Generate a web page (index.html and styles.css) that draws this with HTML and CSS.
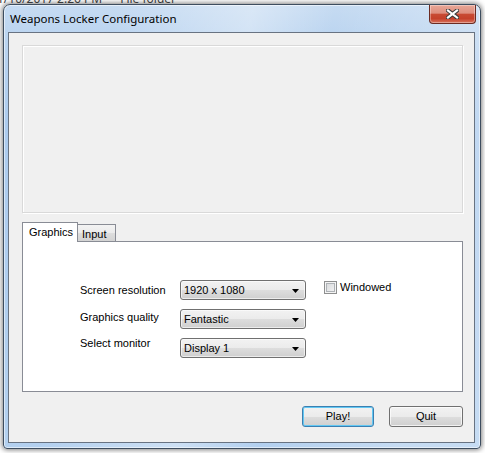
FILE: index.html
```html
<!DOCTYPE html>
<html>
<head>
<meta charset="utf-8">
<link rel="stylesheet" href="styles.css">
</head>
<body>
<div class="behind"><div class="behind-line"><span>1/10/2017 2:26 PM</span><span>File folder</span></div></div>
<div class="window">
  <div class="titlebar">
    <span class="title">Weapons Locker Configuration</span>
    <div class="close">
      <svg width="13" height="10" viewBox="0 0 13 10">
        <path d="M2 1.5 L11 8.5 M11 1.5 L2 8.5" stroke="#3b3b3b" stroke-width="4.2" stroke-linecap="square" fill="none"/>
        <path d="M2 1.5 L11 8.5 M11 1.5 L2 8.5" stroke="#ffffff" stroke-width="2.2" stroke-linecap="square" fill="none"/>
      </svg>
    </div>
  </div>
  <div class="client">
    <div class="banner"></div>
    <div class="tabs">
      <div class="tab active">Graphics</div>
      <div class="tab">Input</div>
    </div>
    <div class="panel">
      <div class="labels">
        <div>Screen resolution</div>
        <div>Graphics quality</div>
        <div>Select monitor</div>
      </div>
      <div class="selects">
        <div class="select"><span>1920 x 1080</span><svg width="7" height="4" viewBox="0 0 7 4"><path d="M0 0 H7 L3.5 4 Z" fill="#000"/></svg></div>
        <div class="select"><span>Fantastic</span><svg width="7" height="4" viewBox="0 0 7 4"><path d="M0 0 H7 L3.5 4 Z" fill="#000"/></svg></div>
        <div class="select"><span>Display 1</span><svg width="7" height="4" viewBox="0 0 7 4"><path d="M0 0 H7 L3.5 4 Z" fill="#000"/></svg></div>
      </div>
      <div class="check">
        <span class="box"></span><span class="check-label">Windowed</span>
      </div>
    </div>
    <div class="buttons">
      <div class="btn default">Play!</div>
      <div class="btn quit">Quit</div>
    </div>
  </div>
</div>
</body>
</html>
```

FILE: styles.css
```css
html, body {
  margin: 0;
  padding: 0;
}
body {
  width: 485px;
  height: 453px;
  overflow: hidden;
  background: #ffffff;
  font-family: "Liberation Sans", Arial, sans-serif;
  font-size: 11px;
  color: #000;
}
.behind {
  height: 4px;
  overflow: hidden;
  font-family: "Noto Sans", sans-serif;
  font-size: 12px;
  color: #3a3a3a;
}
.behind-line {
  margin-top: -10px;
  margin-left: -3px;
  display: flex;
  gap: 18px;
  white-space: nowrap;
}
.window {
  margin-left: 3px;
  width: 478px;
  height: 445px;
  box-sizing: border-box;
  border: 1px solid #3d4d5f;
  border-radius: 7px 7px 4px 4px;
  background:
    linear-gradient(100deg, rgba(255,255,255,0) 20%, rgba(255,255,255,0.35) 45%, rgba(255,255,255,0) 60%, rgba(255,255,255,0.25) 85%),
    linear-gradient(to bottom, #c6dbf2 0, #bcd5f0 28px, #accbee 120px, #b3d0ef 100%);
  box-shadow: 0 0 5px 1px rgba(0,0,0,0.5), inset 0 0 0 1px rgba(255,255,255,0.55);
  display: flex;
  flex-direction: column;
  padding-bottom: 5px;
}
.titlebar {
  height: 27px;
  display: flex;
  align-items: flex-start;
  flex-shrink: 0;
}
.title {
  font-family: "Noto Sans", sans-serif;
  font-size: 11.5px;
  margin-left: 6px;
  margin-top: 6px;
  line-height: 15px;
  color: #000;
}
.close {
  margin-left: auto;
  margin-right: 4px;
  width: 47px;
  height: 19px;
  box-sizing: border-box;
  border: 1px solid #6b2b22;
  border-top: none;
  border-radius: 0 0 4px 4px;
  background: linear-gradient(to bottom, #e8a797 0%, #de8e7e 45%, #c84a33 52%, #c5412b 75%, #d8725d 100%);
  box-shadow: inset 0 0 0 1px rgba(255,255,255,0.35);
  display: flex;
  align-items: center;
  justify-content: center;
}
.client {
  flex: 1;
  margin: 0 5px 0 4px;
  border: 1px solid #687382;
  background: #f0f0f0;
  display: flex;
  flex-direction: column;
}
.banner {
  margin: 12px 0 0 13px;
  width: 441px;
  height: 168px;
  box-sizing: border-box;
  border: 1px solid #d9d9d9;
  box-shadow: inset 1px 1px 0 #ffffff, 1px 1px 0 #ffffff;
}
.tabs {
  margin: 9px 0 0 13px;
  display: flex;
  align-items: flex-end;
  height: 19px;
  position: relative;
  z-index: 1;
}
.tab {
  box-sizing: border-box;
  line-height: 13px;
}
.tab.active {
  width: 56px;
  height: 20px;
  margin-bottom: -1px;
  border: 1px solid #898c95;
  border-bottom: none;
  background: #ffffff;
  padding: 3px 0 0 6px;
}
.tab:not(.active) {
  width: 38px;
  height: 17px;
  border: 1px solid #898c95;
  border-left: none;
  border-bottom: none;
  background: linear-gradient(to bottom, #f3f3f3 0%, #ebebeb 50%, #dddddd 51%, #d3d3d3 100%);
  padding: 3px 0 0 4px;
}
.panel {
  margin-left: 13px;
  width: 441px;
  height: 151px;
  box-sizing: border-box;
  border: 1px solid #898c95;
  background: #ffffff;
  display: flex;
  align-items: flex-start;
  padding: 38px 0 0 57px;
}
.labels {
  width: 100px;
  line-height: 26.7px;
  margin-top: -3px;
}
.selects {
  display: flex;
  flex-direction: column;
  gap: 9px;
}
.select {
  width: 126px;
  height: 20px;
  box-sizing: border-box;
  border: 1px solid #707070;
  border-radius: 3px;
  background: linear-gradient(to bottom, #f2f2f2 0%, #ebebeb 50%, #dddddd 51%, #cfcfcf 100%);
  box-shadow: inset 0 0 0 1px rgba(255,255,255,0.6);
  display: flex;
  align-items: center;
  justify-content: space-between;
  padding: 1px 6px 0 3px;
  line-height: 13px;
}
.check {
  margin-left: 18px;
  margin-top: 1px;
  display: flex;
  align-items: center;
  gap: 3px;
  line-height: 13px;
}
.box {
  width: 13px;
  height: 13px;
  box-sizing: border-box;
  border: 1px solid #8e8f8f;
  background: linear-gradient(135deg, #d4d6d8 0%, #f6f6f6 100%);
  box-shadow: inset 0 0 0 1px #f4f4f4, inset 0 0 0 2px #aeb2b6;
}
.buttons {
  margin: 14px 11px 0 0;
  display: flex;
  justify-content: flex-end;
  gap: 15px;
}
.btn {
  height: 21px;
  box-sizing: border-box;
  border: 1px solid #707070;
  border-radius: 3px;
  background: linear-gradient(to bottom, #f2f2f2 0%, #ebebeb 50%, #dddddd 51%, #cfcfcf 100%);
  box-shadow: inset 0 0 0 1px rgba(255,255,255,0.7);
  text-align: center;
  line-height: 19px;
}
.btn.default {
  width: 72px;
  border-color: #3c7fb1;
  box-shadow: inset 0 0 0 1px #62c8f3;
}
.btn.quit {
  width: 74px;
}
```
